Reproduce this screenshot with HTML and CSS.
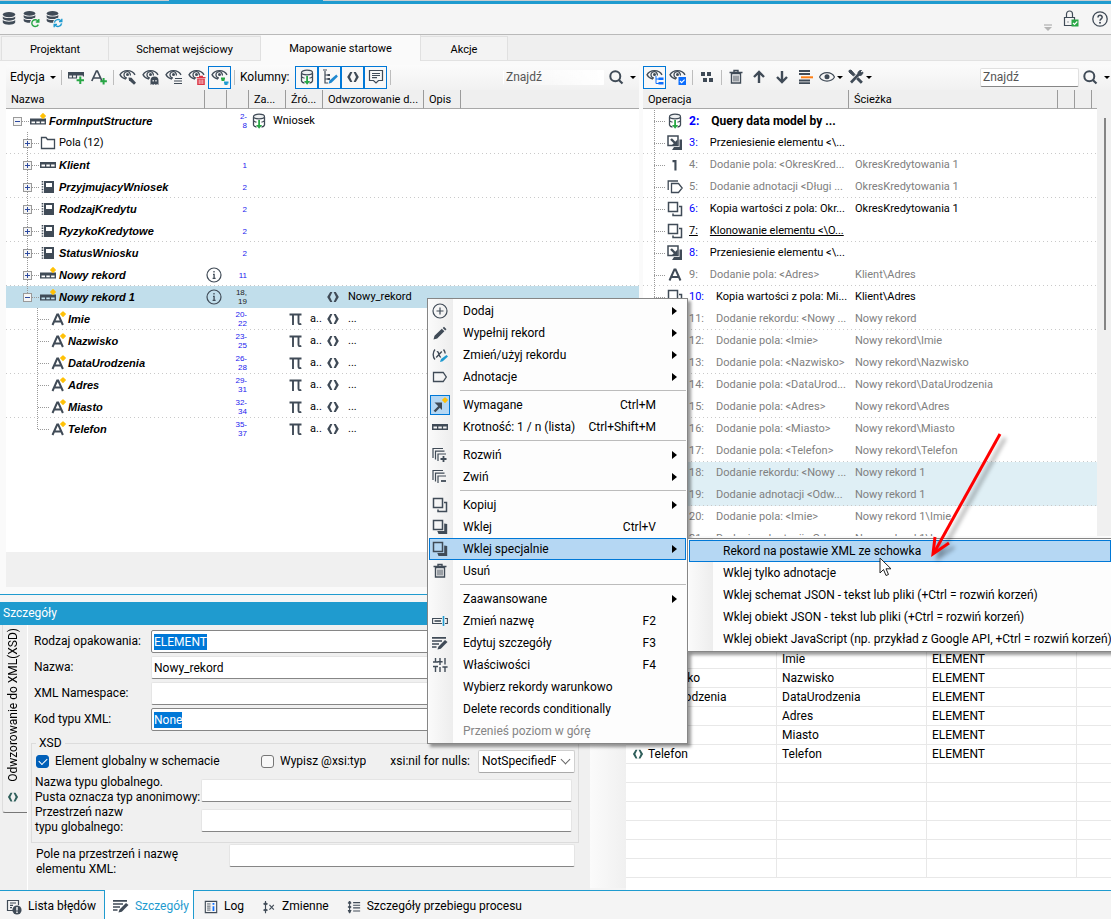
FILE: index.html
```html
<!DOCTYPE html>
<html lang="pl">
<head>
<meta charset="utf-8">
<title>Mapowanie startowe</title>
<link rel="stylesheet" href="styles.css">
</head>
<body>
<svg class="defs" aria-hidden="true">
  <defs>
    <symbol id="db" viewBox="0 0 16 16"><ellipse cx="8" cy="3.6" rx="6.2" ry="2.6"/><path d="M1.8 5.4c1.6 2.2 10.800 2.200 12.400 0v2.200c-1.200 2.800-11.200 2.800-12.400 0zM1.800 9c1.600 2.200 10.800 2.200 12.400 0v2.400c-1.200 3-11.200 3-12.400 0z"/></symbol>
    <symbol id="db-green" viewBox="0 0 18 18"><use href="#db" x="0" y="0" width="15" height="15"/><circle cx="13" cy="13" r="5" fill="#f5f5f5"/><path d="M16 11.200a3.400 3.400 0 1 0 .3 3.400M16.800 9v3h-3" fill="none" stroke="#28a745" stroke-width="1.400"/></symbol>
    <symbol id="db-blue" viewBox="0 0 18 18"><use href="#db" x="0" y="0" width="15" height="15"/><circle cx="13" cy="13" r="5" fill="#f5f5f5"/><path d="M9.400 12.600a3.600 3.600 0 0 1 6.600-1.400M16.600 13.400a3.600 3.600 0 0 1-6.600 1.400M16.800 8.800v2.800H14M9.200 17.200v-2.800H12" fill="none" stroke="#1e9ad0" stroke-width="1.400"/></symbol>
    <symbol id="db-down" viewBox="0 0 16 16"><path d="M2.500 4v8c.3 1 1.600 1.800 3 2M13.500 4v8c-.3 1-1.600 1.800-3 2M2.500 7.500c.8 1.200 2 1.500 3 1.600M13.500 7.500c-.8 1.200-2 1.500-3 1.600" fill="none" stroke="currentColor" stroke-width="1.300"/><ellipse cx="8" cy="3.500" rx="5.500" ry="2.300" fill="#eef0f1" stroke="currentColor" stroke-width="1.200"/><path d="M7.200 7h1.800v5h2.200L8.100 15.800 5 12h2.200z" fill="#28a745"/></symbol>
    <symbol id="rec" viewBox="0 0 16 16"><path d="M0 5h16v6H0zM1.500 7.500v2h3.500v-2zm4.800 0v2h3.500v-2zm4.800 0v2h3.500v-2z" fill-rule="evenodd"/></symbol>
    <symbol id="rec-star" viewBox="0 0 16 16"><path d="M0 5.500h16v6H0zM1.500 8.500v1.700h3.500V8.500zm4.800 0v1.700h3.500V8.500zm4.800 0v1.700h3.500V8.500z" fill-rule="evenodd"/><path d="M13 .8l2.200 2.200L13 5.200l-2.200-2.200z" fill="#ffc107" stroke="#ffc107" stroke-linejoin="round" stroke-width="1.400"/></symbol>
    <symbol id="rec-plus" viewBox="0 0 16 16"><path d="M0 3h16v3.500H0z"/><path d="M.6 6v3h8.400M4.500 6v3M8.500 6v3M15.400 6v1.500" fill="none" stroke="currentColor" stroke-width="1.200"/><path d="M12.300 7.500v7.500M8.600 11.200H16" stroke="#28a745" stroke-width="2" fill="none"/></symbol>
    <symbol id="letter-a" viewBox="0 0 16 16"><path d="M2.500 13.500L7.400 2.500h1.200l4.900 11M4.500 10h7" fill="none" stroke="currentColor" stroke-width="2"/></symbol>
    <symbol id="a-star" viewBox="0 0 16 16"><path d="M1.500 14L6.200 3.500h1L11.900 14M3.400 10.500h6.600" fill="none" stroke="currentColor" stroke-width="2"/><path d="M12 .9l2.200 2.200L12 5.300 9.800 3.100z" fill="#ffc107" stroke="#ffc107" stroke-linejoin="round" stroke-width="1.400"/></symbol>
    <symbol id="a-plus" viewBox="0 0 16 16"><path d="M.8 12L5.400 2h1L11 12M2.600 9h6.600" fill="none" stroke="currentColor" stroke-width="1.700"/><path d="M12.600 9v6.600M9.300 12.300h6.600" stroke="#28a745" stroke-width="2"/></symbol>
    <symbol id="eye" viewBox="0 0 16 16"><path d="M.5 8C3.500 2.200 12.500 2.200 15.500 8 12.500 13.400 3.500 13.400.5 8z" fill="none" stroke="currentColor" stroke-width="1.200"/><circle cx="8" cy="7.800" r="2.500"/></symbol>
    <symbol id="eye-half" viewBox="0 0 18 18"><path d="M7 11C4 10.500 2 8.800 1 6.800 4 1.200 13 1.200 16 6.800" fill="none" stroke="currentColor" stroke-width="1.400"/><path d="M11.300 7.500A3.200 3.200 0 1 0 8 10" fill="none" stroke="currentColor" stroke-width="1.300"/><circle cx="8.500" cy="6.500" r="1.500"/></symbol>
    <symbol id="eye-pick" viewBox="0 0 18 18"><use href="#eye-half" width="18" height="18"/><path d="M9.500 9.500l3 .3 4.500 5-2 2-5-4.500z"/></symbol>
    <symbol id="eye-ghost" viewBox="0 0 18 18"><use href="#eye-half" width="18" height="18"/><path d="M8.500 17v-4.500a4 4 0 0 1 8 0V17l-1.500-1-1 1-1.500-1-1.500 1-1-1z"/><path d="M10.600 12h1.200v1.500h-1.200zm2.800 0h1.200v1.500h-1.200z" fill="#f8f8f8"/></symbol>
    <symbol id="eye-lines" viewBox="0 0 18 18"><use href="#eye-half" width="18" height="18"/><path d="M10 10.500h7M9 13h8M9 15.500h8" stroke="currentColor" stroke-width="1.200"/></symbol>
    <symbol id="eye-trash" viewBox="0 0 18 18"><use href="#eye-half" width="18" height="18"/><path d="M8.500 9h9v1.300h-9zM11 7.800h4V9h-4zM9.200 10.800h7.600V17H9.200z" fill="#dc3545"/><path d="M11.200 11.500V16M13 11.500V16M14.800 11.500V16" stroke="#fff" stroke-width=".7"/></symbol>
    <symbol id="eye-dots" viewBox="0 0 18 18"><use href="#eye-half" width="18" height="18"/><path d="M10 10.500h4M10.500 12h3" stroke="#28a745" stroke-width="1.800"/><path d="M13 14.500h4.500M13.500 16h3" stroke="#1e9ad0" stroke-width="1.800"/></symbol>
    <symbol id="eye-tree" viewBox="0 0 18 18"><use href="#eye-half" width="18" height="18"/><path d="M10 8v7.500h3M10 11h3" fill="none" stroke="#0d6efd"/><path d="M12.500 9.500h5v2.500h-5zM12.500 14h5v2.500h-5z" fill="#0d6efd"/></symbol>
    <symbol id="eye-check" viewBox="0 0 18 18"><use href="#eye-half" width="18" height="18"/><path d="M9.500 9H17v8H9.500z" fill="#0d6efd"/><path d="M11 13l1.600 1.600 3-3" fill="none" stroke="#fff" stroke-width="1.100"/></symbol>
    <symbol id="tree-edit" viewBox="0 0 16 16"><path d="M1 1h4M3 2v12h3M3 6h3M3 10h3" fill="none" stroke="currentColor" stroke-width="1.200"/><path d="M5.500 5H8v2H5.500zM5.500 9H8v2H5.500z"/><path d="M6.500 14.800l1-3.200 6.800-6 1.600 2-6.400 6.200z" fill="#1e88d0"/></symbol>
    <symbol id="angle" viewBox="0 0 16 16"><path d="M5.200 3h2.200L5 8l2.400 5H5.200L2.200 8zM10.800 3H8.600L11 8l-2.400 5h2.200l3-5z"/></symbol>
    <symbol id="note" viewBox="0 0 16 16"><path d="M1.500 1.500h13v10h-4L8 14l-2.500-2.500h-4zM4 4.500h8M4 6.500h8M4 8.700h5" fill="none" stroke="currentColor" stroke-width="1.200"/></symbol>
    <symbol id="search" viewBox="0 0 16 16"><circle cx="7.300" cy="7.300" r="5" fill="none" stroke="currentColor" stroke-width="2"/><path d="M10.800 11l3.700 3.500" stroke="currentColor" stroke-width="2.200"/></symbol>
    <symbol id="blocks" viewBox="0 0 16 16"><path d="M2 3h4v4H2zM8 3h4v4H8zM4 9h4v4H4zM10 9h4v4h-4z"/></symbol>
    <symbol id="trash" viewBox="0 0 16 16"><path d="M1.500 3.500h13M6 3V1.500h4V3" fill="none" stroke="currentColor" stroke-width="1.400"/><path d="M3.500 4.500h9V14h-9z" fill="none" stroke="currentColor" stroke-width="1.400"/><path d="M6 6.500v6M8 6.500v6M10 6.500v6" stroke="currentColor"/></symbol>
    <symbol id="up" viewBox="0 0 16 16"><path d="M8 2.800V14M3 8l5-5 5 5" fill="none" stroke="currentColor" stroke-width="2.400"/></symbol>
    <symbol id="down" viewBox="0 0 16 16"><path d="M8 2v11.200M3 8l5 5 5-5" fill="none" stroke="currentColor" stroke-width="2.400"/></symbol>
    <symbol id="bars" viewBox="0 0 16 16"><path d="M2 2h11M2 5h11M2 11.500h11M2 14.200h11" stroke="currentColor" stroke-width="1.800"/><path d="M4 8.300h12" stroke="#fd7e14" stroke-width="2"/></symbol>
    <symbol id="tools" viewBox="0 0 16 16"><path d="M3 13.500L12 4" stroke="currentColor" stroke-width="2.600"/><path d="M10 5a3 3 0 0 1 3.500-3.500L12 3l1 1 1.800-1A3 3 0 0 1 11.500 6.500zM1 1.500l2-.5 4 4.500-1.500 1.500L1 3zM9 9.500L14 14" stroke="currentColor" stroke-width="1"/><path d="M9.300 9.300l4.500 4.500" stroke="currentColor" stroke-width="3"/></symbol>
    <symbol id="lock" viewBox="0 0 18 18"><path d="M2.500 7.500h10v8h-10zM4.500 7V4a3 3 0 0 1 6 0v3M5.500 12h1" fill="none" stroke="currentColor" stroke-width="1.200"/><path d="M9.500 9.500h7v7h-7z" fill="#28a745"/><path d="M11 13l1.500 1.500 2.800-3" fill="none" stroke="#fff" stroke-width="1.100"/></symbol>
    <symbol id="help" viewBox="0 0 16 16"><circle cx="8" cy="8" r="7.200" fill="none" stroke="currentColor" stroke-width="1.300"/><path d="M6 6.500c0-3 4.300-2.800 4.200-.2C10.200 7.800 8 8 8 9.800" fill="none" stroke="currentColor" stroke-width="1.500"/><circle cx="8" cy="11.800" r="1"/></symbol>
    <symbol id="folder" viewBox="0 0 16 16"><path d="M1.500 13.500v-11h4.500l1.500 2h7v9z" fill="none" stroke="currentColor" stroke-width="1.300"/></symbol>
    <symbol id="book" viewBox="0 0 16 16"><path d="M4 2h10v12H4zM6 4v4h6V4z" fill-rule="evenodd"/><path d="M2.500 2v12" stroke="currentColor" stroke-width="1.600" stroke-dasharray="1.400 1.200"/></symbol>
    <symbol id="info" viewBox="0 0 16 16"><circle cx="8" cy="8" r="7" fill="none" stroke="currentColor" stroke-width="1.200"/><path d="M8 4v1.500M7 7.300h1.100v3.700M6.600 11.300h3" fill="none" stroke="currentColor" stroke-width="1.300"/></symbol>
    <symbol id="pi" viewBox="0 0 16 16"><path d="M1.500 3.500h12M5 4v10M10.500 4v7.500c0 1.600 1 2 2.800 1.300" fill="none" stroke="currentColor" stroke-width="1.900"/></symbol>
    <symbol id="move" viewBox="0 0 16 16"><path d="M1 1h10v9.500H1z" fill="none" stroke="currentColor" stroke-width="1.500"/><path d="M4 4l5.500 5.500" stroke="currentColor" stroke-width="2.400"/><path d="M10.500 4.500v5.500H5z"/><path d="M12.500 4.500H15V15H5l2-3h5.500z"/></symbol>
    <symbol id="one" viewBox="0 0 16 16"><path d="M5.500 3h4v10.500H7.400V5.300H5.500z"/></symbol>
    <symbol id="tags" viewBox="0 0 16 16"><path d="M4.500 4.500h7L15.200 9l-3.700 4.500h-7zM1.200 11V2H11" fill="none" stroke="currentColor" stroke-width="1.300"/></symbol>
    <symbol id="copy" viewBox="0 0 16 16"><path d="M1.500 1.500h9v9h-9zM12 5.500h2.500v9H6V12.500" fill="none" stroke="currentColor" stroke-width="1.500"/></symbol>
    <symbol id="paste" viewBox="0 0 16 16"><path d="M1.500 1.500h9v9h-9z" fill="none" stroke="currentColor" stroke-width="1.500"/><path d="M12.200 4.500l3 .6V15H6.500L5.300 12h6.900z"/></symbol>
    <symbol id="circle-plus" viewBox="0 0 16 16"><circle cx="8" cy="8" r="7" fill="none" stroke="currentColor" stroke-width="1.200"/><path d="M8 4.500v7M4.500 8h7" stroke="currentColor" stroke-width="1.200"/></symbol>
    <symbol id="pencil" viewBox="0 0 16 16"><path d="M1.500 14.500l1-3.800 7.300-7 2.600 2.600-7.200 7.200zM10.700 2.900l1.300-1.200 2.500 2.500-1.300 1.300z"/></symbol>
    <symbol id="var-edit" viewBox="0 0 16 16"><path d="M3 2.500C.6 5 .6 10 3 12.500M11.500 2.500c1 1.200 1.600 2.500 1.700 4M4.800 4.700c2.400-1 1.800 6 4.200 5.400M9.800 4.500L4.200 10.500" fill="none" stroke="currentColor" stroke-width="1.400"/><path d="M8 15l1-3L14.500 8 16 9.600l-5.200 4.600z" fill="#1e9ad0"/></symbol>
    <symbol id="tag" viewBox="0 0 16 16"><path d="M1.500 3.500h9.700L14.300 8l-3.100 4.500H1.500z" fill="none" stroke="currentColor" stroke-width="1.300"/></symbol>
    <symbol id="required" viewBox="0 0 16 16"><path d="M2.500 14.500L8 9" stroke="currentColor" stroke-width="2.400"/><path d="M2.500 5.500H10V13L7.500 10.500 5 8z"/><path d="M13 .9l2.200 2.200L13 5.300l-2.200-2.200z" fill="#ffc107" stroke="#ffc107" stroke-linejoin="round" stroke-width="1.400"/></symbol>
    <symbol id="stack-plus" viewBox="0 0 16 16"><path d="M1 11V1.500h10M3.500 12.500V4.200h9M6 14V7h8" fill="none" stroke="currentColor" stroke-width="1.200"/><path d="M11.500 9v6M8.500 12h6" stroke="currentColor" stroke-width="1.800"/></symbol>
    <symbol id="stack-minus" viewBox="0 0 16 16"><path d="M1 11V1.500h10M3.500 12.500V4.200h9M6 14V7h8" fill="none" stroke="currentColor" stroke-width="1.200"/><path d="M9 12h5" stroke="currentColor" stroke-width="1.800"/></symbol>
    <symbol id="rename" viewBox="0 0 16 16"><path d="M10 5.500H.6v5H10M13 5.500h2.400v5H13" fill="none" stroke="currentColor" stroke-width="1.100"/><path d="M2.500 8H9" stroke="currentColor" stroke-width="1.600"/><path d="M11.500 3v10" stroke="#1e9ad0" stroke-width="1.600"/></symbol>
    <symbol id="edit-lines" viewBox="0 0 16 16"><path d="M0 2.800h14M0 6h10M0 9h7M0 12h4.500" stroke="currentColor" stroke-width="1.700"/><path d="M5.500 14.500l.8-2.800L13 5l2.500 2-6.700 6.800z"/></symbol>
    <symbol id="sliders" viewBox="0 0 16 16"><path d="M3.500 1v4M1 5h5M3.500 9v6M8 1v7M5.600 4.800h5M8 10v5M13 1v6.500M10.400 10h5.200M13 10v5M1 9.500h5" fill="none" stroke="currentColor" stroke-width="1.400"/></symbol>
    <symbol id="errors" viewBox="0 0 16 16"><path d="M7 11.500H1.500v-10h11V6M4 4h6M4 6.300h3M4 8.600h2" fill="none" stroke="currentColor" stroke-width="1.200"/><circle cx="11" cy="11" r="4.600"/><path d="M11 8v3.500M11 12.600V14" stroke="#fff" stroke-width="1.400"/></symbol>
    <symbol id="log" viewBox="0 0 16 16"><path d="M1.500 1.500h13v13h-13z" fill="none" stroke="currentColor" stroke-width="1.300"/><path d="M3.500 4.500h4M3.500 7h4M3.500 9.200h4M3.500 11.500h4" stroke="currentColor"/><path d="M10.800 3.500v2M10.800 7v5.500" stroke="#0d6efd" stroke-width="2"/></symbol>
    <symbol id="vars" viewBox="0 0 16 16"><path d="M4 1v14M1.500 4.500h5M1.500 11.500h5M8.500 5.500l5 5.500M13.500 5.500l-5 5.500" fill="none" stroke="currentColor" stroke-width="1.300"/><circle cx="4" cy="4.500" r="1.600"/><circle cx="4" cy="11.500" r="1.600"/></symbol>
    <symbol id="flow" viewBox="0 0 16 16"><path d="M3 1v14M1 3.500h4M1 8h4M1 12h4M7 3h8M7 6h8M7 9h8M7 12.500h8" fill="none" stroke="currentColor" stroke-width="1.200"/><circle cx="3" cy="3" r="1.500"/><circle cx="3" cy="8" r="1.500"/><circle cx="3" cy="13" r="1.500"/></symbol>
  </defs>
</svg>

<header class="appbar">
  <div class="accent"><span class="accent-a"></span><span class="accent-b"></span></div>
  <div class="appbar-row">
    <button class="app-btn" aria-label="Baza"><svg class="i16"><use href="#db"/></svg></button>
    <button class="app-btn" aria-label="Odśwież bazę"><svg class="i18"><use href="#db-green"/></svg></button>
    <button class="app-btn" aria-label="Synchronizuj bazę"><svg class="i18"><use href="#db-blue"/></svg></button>
    <span class="overflow-mark"></span>
    <button class="app-btn lock" aria-label="Blokada"><svg class="i18"><use href="#lock"/></svg></button>
    <button class="app-btn help" aria-label="Pomoc"><svg class="i16"><use href="#help"/></svg></button>
  </div>
</header>

<nav class="tabs">
  <button class="tab t1">Projektant</button>
  <button class="tab t2">Schemat wejściowy</button>
  <button class="tab t3 active">Mapowanie startowe</button>
  <button class="tab t4">Akcje</button>
</nav>

<main class="workspace">
  <section class="pane pane-left">
    <div class="toolbar">
      <button class="tb-text">Edycja <span class="caret"></span></button>
      <span class="sep"></span>
      <button class="tb" aria-label="Dodaj rekord"><svg class="i16"><use href="#rec-plus"/></svg></button>
      <button class="tb" aria-label="Dodaj pole"><svg class="i16"><use href="#a-plus"/></svg></button>
      <span class="sep"></span>
      <button class="tb" aria-label="Widok 1"><svg class="i18"><use href="#eye-pick"/></svg></button>
      <button class="tb" aria-label="Widok 2"><svg class="i18"><use href="#eye-ghost"/></svg></button>
      <button class="tb" aria-label="Widok 3"><svg class="i18"><use href="#eye-lines"/></svg></button>
      <button class="tb" aria-label="Widok 4"><svg class="i18"><use href="#eye-trash"/></svg></button>
      <button class="tb on" aria-label="Widok 5"><svg class="i18"><use href="#eye-dots"/></svg></button>
      <span class="sep"></span>
      <span class="tb-label">Kolumny:</span>
      <button class="tb on" aria-label="Źródło"><svg class="i16"><use href="#db-down"/></svg></button>
      <button class="tb on" aria-label="Drzewo"><svg class="i16"><use href="#tree-edit"/></svg></button>
      <button class="tb on" aria-label="XML"><svg class="i16"><use href="#angle"/></svg></button>
      <button class="tb on" aria-label="Opis"><svg class="i16"><use href="#note"/></svg></button>
      <span class="sep"></span>
      <input class="find plain" type="text" placeholder="Znajdź" aria-label="Znajdź w drzewie">
      <button class="tb-find" aria-label="Szukaj"><svg class="i16"><use href="#search"/></svg><span class="caret"></span></button>
    </div>
    <div class="grid-box">
      <table class="grid">
        <colgroup><col class="c199"><col class="c22"><col class="c22"><col class="c37"><col class="c37"><col class="c101"><col class="c37"><col></colgroup>
        <thead><tr><th>Nazwa</th><th></th><th></th><th>Za...</th><th>Źró...</th><th>Odwzorowanie d...</th><th>Opis</th><th class="last"></th></tr></thead>
        <tbody>
          <tr><td><div class="node"><span class="tg root"><button class="box minus" aria-label="Zwiń"></button></span><span class="dash"></span><svg class="i16"><use href="#rec-star"/></svg><b>FormInputStructure</b></div></td><td></td><td class="num">2-<br>8</td><td colspan="2"><div class="src"><svg class="i16"><use href="#db-down"/></svg>Wniosek</div></td><td></td><td></td><td></td></tr>
          <tr class="dots"><td><div class="node l1"><span class="tg"><button class="box plus" aria-label="Rozwiń"></button></span><span class="dash"></span><svg class="i16"><use href="#folder"/></svg>Pola (12)</div></td><td></td><td></td><td></td><td></td><td></td><td></td><td></td></tr>
          <tr><td><div class="node l1"><span class="tg"><button class="box plus" aria-label="Rozwiń"></button></span><span class="dash"></span><svg class="i16"><use href="#rec"/></svg><b>Klient</b></div></td><td></td><td class="num">1</td><td></td><td></td><td></td><td></td><td></td></tr>
          <tr class="dots"><td><div class="node l1"><span class="tg"><button class="box plus" aria-label="Rozwiń"></button></span><span class="dash"></span><svg class="i16"><use href="#book"/></svg><b>PrzyjmujacyWniosek</b></div></td><td></td><td class="num">2</td><td></td><td></td><td></td><td></td><td></td></tr>
          <tr><td><div class="node l1"><span class="tg"><button class="box plus" aria-label="Rozwiń"></button></span><span class="dash"></span><svg class="i16"><use href="#book"/></svg><b>RodzajKredytu</b></div></td><td></td><td class="num">2</td><td></td><td></td><td></td><td></td><td></td></tr>
          <tr class="dots"><td><div class="node l1"><span class="tg"><button class="box plus" aria-label="Rozwiń"></button></span><span class="dash"></span><svg class="i16"><use href="#book"/></svg><b>RyzykoKredytowe</b></div></td><td></td><td class="num">2</td><td></td><td></td><td></td><td></td><td></td></tr>
          <tr><td><div class="node l1"><span class="tg"><button class="box plus" aria-label="Rozwiń"></button></span><span class="dash"></span><svg class="i16"><use href="#book"/></svg><b>StatusWniosku</b></div></td><td></td><td class="num">2</td><td></td><td></td><td></td><td></td><td></td></tr>
          <tr class="dots"><td><div class="node l1"><span class="tg"><button class="box plus" aria-label="Rozwiń"></button></span><span class="dash"></span><svg class="i16"><use href="#rec-star"/></svg><b>Nowy rekord</b></div></td><td class="ic"><svg class="i16"><use href="#info"/></svg></td><td class="num">11</td><td></td><td></td><td></td><td></td><td></td></tr>
          <tr class="sel"><td><div class="node l1"><span class="tg end"><button class="box minus" aria-label="Zwiń"></button></span><span class="dash"></span><svg class="i16"><use href="#rec-star"/></svg><b>Nowy rekord 1</b></div></td><td class="ic"><svg class="i16"><use href="#info"/></svg></td><td class="num dark">18,<br>19</td><td></td><td></td><td><div class="map"><svg class="i16"><use href="#angle"/></svg>Nowy_rekord</div></td><td></td><td></td></tr>
          <tr class="dots"><td><div class="node l2"><span class="tg leaf"></span><span class="dash"></span><svg class="i16"><use href="#a-star"/></svg><b>Imie</b></div></td><td></td><td class="num">20-<br>22</td><td></td><td><div class="pi"><svg class="i16"><use href="#pi"/></svg>a..</div></td><td><div class="map"><svg class="i16"><use href="#angle"/></svg>...</div></td><td></td><td></td></tr>
          <tr><td><div class="node l2"><span class="tg leaf"></span><span class="dash"></span><svg class="i16"><use href="#a-star"/></svg><b>Nazwisko</b></div></td><td></td><td class="num">23-<br>25</td><td></td><td><div class="pi"><svg class="i16"><use href="#pi"/></svg>a..</div></td><td><div class="map"><svg class="i16"><use href="#angle"/></svg>...</div></td><td></td><td></td></tr>
          <tr class="dots"><td><div class="node l2"><span class="tg leaf"></span><span class="dash"></span><svg class="i16"><use href="#a-star"/></svg><b>DataUrodzenia</b></div></td><td></td><td class="num">26-<br>28</td><td></td><td><div class="pi"><svg class="i16"><use href="#pi"/></svg>a..</div></td><td><div class="map"><svg class="i16"><use href="#angle"/></svg>...</div></td><td></td><td></td></tr>
          <tr><td><div class="node l2"><span class="tg leaf"></span><span class="dash"></span><svg class="i16"><use href="#a-star"/></svg><b>Adres</b></div></td><td></td><td class="num">29-<br>31</td><td></td><td><div class="pi"><svg class="i16"><use href="#pi"/></svg>a..</div></td><td><div class="map"><svg class="i16"><use href="#angle"/></svg>...</div></td><td></td><td></td></tr>
          <tr class="dots"><td><div class="node l2"><span class="tg leaf"></span><span class="dash"></span><svg class="i16"><use href="#a-star"/></svg><b>Miasto</b></div></td><td></td><td class="num">32-<br>34</td><td></td><td><div class="pi"><svg class="i16"><use href="#pi"/></svg>a..</div></td><td><div class="map"><svg class="i16"><use href="#angle"/></svg>...</div></td><td></td><td></td></tr>
          <tr><td><div class="node l2"><span class="tg leaf end"></span><span class="dash"></span><svg class="i16"><use href="#a-star"/></svg><b>Telefon</b></div></td><td></td><td class="num">35-<br>37</td><td></td><td><div class="pi"><svg class="i16"><use href="#pi"/></svg>a..</div></td><td><div class="map"><svg class="i16"><use href="#angle"/></svg>...</div></td><td></td><td></td></tr>
        </tbody>
      </table>
    </div>
    <div class="grid-foot"></div>
  </section>

  <section class="pane pane-right">
    <div class="toolbar">
      <button class="tb on" aria-label="Drzewo operacji"><svg class="i18"><use href="#eye-tree"/></svg></button>
      <button class="tb" aria-label="Zaznaczone"><svg class="i18"><use href="#eye-check"/></svg></button>
      <span class="sep"></span>
      <button class="tb" aria-label="Bloki"><svg class="i16"><use href="#blocks"/></svg></button>
      <span class="sep"></span>
      <button class="tb" aria-label="Usuń"><svg class="i16"><use href="#trash"/></svg></button>
      <button class="tb" aria-label="W górę"><svg class="i16"><use href="#up"/></svg></button>
      <button class="tb" aria-label="W dół"><svg class="i16"><use href="#down"/></svg></button>
      <button class="tb" aria-label="Lista"><svg class="i16"><use href="#bars"/></svg></button>
      <button class="tb wide" aria-label="Widoczność"><svg class="i16"><use href="#eye"/></svg><span class="caret"></span></button>
      <button class="tb wide" aria-label="Narzędzia"><svg class="i16"><use href="#tools"/></svg><span class="caret"></span></button>
      <input class="find" type="text" placeholder="Znajdź" aria-label="Znajdź operację">
      <button class="tb-find" aria-label="Szukaj"><svg class="i16"><use href="#search"/></svg><span class="caret"></span></button>
    </div>
    <div class="ops">
      <div class="grid-box">
        <table class="grid">
          <colgroup><col class="c206"><col><col class="c17"><col class="c17"><col class="c5"></colgroup>
          <thead><tr><th>Operacja</th><th>Ścieżka</th><th></th><th></th><th class="last"></th></tr></thead>
          <tbody>
            <tr class="strong"><td><div class="op"><svg class="i16"><use href="#db-down"/></svg><i>2:</i><span>Query data model by ...</span></div></td><td colspan="4"></td></tr>
            <tr class="dots"><td><div class="op"><svg class="i16"><use href="#move"/></svg><i>3:</i><span>Przeniesienie elementu &lt;\...</span></div></td><td colspan="4"></td></tr>
            <tr class="dim"><td><div class="op"><svg class="i16"><use href="#one"/></svg><i>4:</i><span>Dodanie pola: &lt;OkresKred...</span></div></td><td colspan="4">OkresKredytowania 1</td></tr>
            <tr class="dim dots"><td><div class="op"><svg class="i16"><use href="#tags"/></svg><i>5:</i><span>Dodanie adnotacji &lt;Długi ...</span></div></td><td colspan="4">OkresKredytowania 1</td></tr>
            <tr><td><div class="op"><svg class="i16"><use href="#copy"/></svg><i>6:</i><span>Kopia wartości z pola: Okr...</span></div></td><td colspan="4">OkresKredytowania 1</td></tr>
            <tr class="dots link"><td><div class="op"><svg class="i16"><use href="#copy"/></svg><i>7:</i><span>Klonowanie elementu &lt;\O...</span></div></td><td colspan="4"></td></tr>
            <tr><td><div class="op"><svg class="i16"><use href="#move"/></svg><i>8:</i><span>Przeniesienie elementu &lt;\...</span></div></td><td colspan="4"></td></tr>
            <tr class="dim dots"><td><div class="op"><svg class="i16"><use href="#letter-a"/></svg><i>9:</i><span>Dodanie pola: &lt;Adres&gt;</span></div></td><td colspan="4">Klient\Adres</td></tr>
            <tr><td><div class="op"><svg class="i16"><use href="#copy"/></svg><i>10:</i><span>Kopia wartości z pola: Mi...</span></div></td><td colspan="4">Klient\Adres</td></tr>
            <tr class="dim dots"><td><div class="op"><svg class="i16"><use href="#rec"/></svg><i>11:</i><span>Dodanie rekordu: &lt;Nowy ...</span></div></td><td colspan="4">Nowy rekord</td></tr>
            <tr class="dim"><td><div class="op"><svg class="i16"><use href="#letter-a"/></svg><i>12:</i><span>Dodanie pola: &lt;Imie&gt;</span></div></td><td colspan="4">Nowy rekord\Imie</td></tr>
            <tr class="dim dots"><td><div class="op"><svg class="i16"><use href="#letter-a"/></svg><i>13:</i><span>Dodanie pola: &lt;Nazwisko&gt;</span></div></td><td colspan="4">Nowy rekord\Nazwisko</td></tr>
            <tr class="dim"><td><div class="op"><svg class="i16"><use href="#letter-a"/></svg><i>14:</i><span>Dodanie pola: &lt;DataUrod...</span></div></td><td colspan="4">Nowy rekord\DataUrodzenia</td></tr>
            <tr class="dim dots"><td><div class="op"><svg class="i16"><use href="#letter-a"/></svg><i>15:</i><span>Dodanie pola: &lt;Adres&gt;</span></div></td><td colspan="4">Nowy rekord\Adres</td></tr>
            <tr class="dim"><td><div class="op"><svg class="i16"><use href="#letter-a"/></svg><i>16:</i><span>Dodanie pola: &lt;Miasto&gt;</span></div></td><td colspan="4">Nowy rekord\Miasto</td></tr>
            <tr class="dim dots"><td><div class="op"><svg class="i16"><use href="#letter-a"/></svg><i>17:</i><span>Dodanie pola: &lt;Telefon&gt;</span></div></td><td colspan="4">Nowy rekord\Telefon</td></tr>
            <tr class="dim mark"><td><div class="op"><svg class="i16"><use href="#rec"/></svg><i>18:</i><span>Dodanie rekordu: &lt;Nowy ...</span></div></td><td colspan="4">Nowy rekord 1</td></tr>
            <tr class="dim mark dots"><td><div class="op"><svg class="i16"><use href="#tags"/></svg><i>19:</i><span>Dodanie adnotacji &lt;Odw...</span></div></td><td colspan="4">Nowy rekord 1</td></tr>
            <tr class="dim"><td><div class="op"><svg class="i16"><use href="#letter-a"/></svg><i>20:</i><span>Dodanie pola: &lt;Imie&gt;</span></div></td><td colspan="4">Nowy rekord 1\Imie</td></tr>
            <tr class="dim"><td><div class="op"><svg class="i16"><use href="#tags"/></svg><i>21:</i><span>Dodanie adnotacji &lt;Odw...</span></div></td><td colspan="4">Nowy rekord 1\Imie</td></tr>
          </tbody>
        </table>
      </div>
      <div class="scroll"><span class="thumb"></span></div>
    </div>
  </section>
</main>

<section class="bottom">
  <div class="details">
    <h2>Szczegóły</h2>
    <div class="details-body">
      <div class="side">
        <button class="side-tab"><svg class="i14"><use href="#angle"/></svg><span>Odwzorowanie do XML(XSD)</span></button>
      </div>
      <form class="form">
        <div class="row"><label for="f1">Rodzaj opakowania:</label><div class="field combo"><input id="f1" type="text" value="ELEMENT"></div></div>
        <div class="row"><label for="f2">Nazwa:</label><div class="field"><input id="f2" type="text" value="Nowy_rekord"></div></div>
        <div class="row"><label for="f3">XML Namespace:</label><div class="field"><input id="f3" type="text"></div></div>
        <div class="row"><label for="f4">Kod typu XML:</label><div class="field combo"><input id="f4" type="text" value="None"></div></div>
        <fieldset>
          <legend>XSD</legend>
          <div class="checks">
            <input id="g1" type="checkbox" checked><label for="g1" class="grow">Element globalny w schemacie</label>
            <input id="g2" type="checkbox"><label for="g2" class="typ">Wypisz @xsi:typ</label>
            <label for="g3" class="nil">xsi:nil for nulls:</label>
            <select id="g3"><option>NotSpecifiedForNulls</option></select>
          </div>
          <div class="row2"><label for="g4">Nazwa typu globalnego.<br>Pusta oznacza typ anonimowy:</label><div class="field"><input id="g4" type="text"></div></div>
          <div class="row2"><label for="g5">Przestrzeń nazw<br>typu globalnego:</label><div class="field"><input id="g5" type="text"></div></div>
        </fieldset>
        <div class="row3"><label for="f5">Pole na przestrzeń i nazwę<br>elementu XML:</label><div class="field"><input id="f5" type="text"></div></div>
      </form>
    </div>
  </div>
  <div class="gutter"></div>
  <div class="data">
    <table>
      <colgroup><col class="c151"><col class="c150"><col class="c150"><col></colgroup>
      <thead><tr><td colspan="4"></td></tr></thead>
      <tbody>
        <tr><td><div><svg class="i14"><use href="#angle"/></svg>Imie</div></td><td>Imie</td><td>ELEMENT</td><td></td></tr>
        <tr><td><div><svg class="i14"><use href="#angle"/></svg>Nazwisko</div></td><td>Nazwisko</td><td>ELEMENT</td><td></td></tr>
        <tr><td><div><svg class="i14"><use href="#angle"/></svg>DataUrodzenia</div></td><td>DataUrodzenia</td><td>ELEMENT</td><td></td></tr>
        <tr><td><div><svg class="i14"><use href="#angle"/></svg>Adres</div></td><td>Adres</td><td>ELEMENT</td><td></td></tr>
        <tr><td><div><svg class="i14"><use href="#angle"/></svg>Miasto</div></td><td>Miasto</td><td>ELEMENT</td><td></td></tr>
        <tr><td><div><svg class="i14"><use href="#angle"/></svg>Telefon</div></td><td>Telefon</td><td>ELEMENT</td><td></td></tr>
        <tr><td></td><td></td><td></td><td></td></tr>
        <tr><td></td><td></td><td></td><td></td></tr>
        <tr><td></td><td></td><td></td><td></td></tr>
        <tr><td></td><td></td><td></td><td></td></tr>
        <tr><td></td><td></td><td></td><td></td></tr>
        <tr><td></td><td></td><td></td><td></td></tr>
      </tbody>
    </table>
  </div>
</section>

<nav class="dock">
  <button><svg class="i16"><use href="#errors"/></svg>Lista błędów</button>
  <button class="active"><svg class="i16"><use href="#edit-lines"/></svg>Szczegóły</button>
  <button><svg class="i14"><use href="#log"/></svg>Log</button>
  <button><svg class="i14"><use href="#vars"/></svg>Zmienne</button>
  <button><svg class="i14"><use href="#flow"/></svg>Szczegóły przebiegu procesu</button>
</nav>

<div class="menu context" role="menu">
  <button role="menuitem"><svg class="i16"><use href="#circle-plus"/></svg><span>Dodaj</span><em class="arr"></em></button>
  <button role="menuitem"><svg class="i16"><use href="#pencil"/></svg><span>Wypełnij rekord</span><em class="arr"></em></button>
  <button role="menuitem"><svg class="i16"><use href="#var-edit"/></svg><span>Zmień/użyj rekordu</span><em class="arr"></em></button>
  <button role="menuitem"><svg class="i16"><use href="#tag"/></svg><span>Adnotacje</span><em class="arr"></em></button>
  <hr>
  <button role="menuitem" class="checked"><svg class="i16"><use href="#required"/></svg><span>Wymagane</span><kbd>Ctrl+M</kbd></button>
  <button role="menuitem"><svg class="i16"><use href="#rec"/></svg><span>Krotność: 1 / n (lista)</span><kbd>Ctrl+Shift+M</kbd></button>
  <hr>
  <button role="menuitem"><svg class="i16"><use href="#stack-plus"/></svg><span>Rozwiń</span><em class="arr"></em></button>
  <button role="menuitem"><svg class="i16"><use href="#stack-minus"/></svg><span>Zwiń</span><em class="arr"></em></button>
  <hr>
  <button role="menuitem"><svg class="i16"><use href="#copy"/></svg><span>Kopiuj</span><em class="arr"></em></button>
  <button role="menuitem"><svg class="i16"><use href="#paste"/></svg><span>Wklej</span><kbd>Ctrl+V</kbd></button>
  <button role="menuitem" class="hot"><svg class="i16"><use href="#paste"/></svg><span>Wklej specjalnie</span><em class="arr"></em></button>
  <button role="menuitem"><svg class="i16"><use href="#trash"/></svg><span>Usuń</span></button>
  <hr>
  <button role="menuitem"><span class="no-icon"></span><span>Zaawansowane</span><em class="arr"></em></button>
  <button role="menuitem"><svg class="i16"><use href="#rename"/></svg><span>Zmień nazwę</span><kbd>F2</kbd></button>
  <button role="menuitem"><svg class="i16"><use href="#edit-lines"/></svg><span>Edytuj szczegóły</span><kbd>F3</kbd></button>
  <button role="menuitem"><svg class="i16"><use href="#sliders"/></svg><span>Właściwości</span><kbd>F4</kbd></button>
  <button role="menuitem"><span class="no-icon"></span><span>Wybierz rekordy warunkowo</span></button>
  <button role="menuitem"><span class="no-icon"></span><span>Delete records conditionally</span></button>
  <button role="menuitem" disabled><span class="no-icon"></span><span>Przenieś poziom w górę</span></button>
</div>

<div class="menu submenu" role="menu">
  <button role="menuitem" class="hot"><span class="no-icon"></span><span>Rekord na postawie XML ze schowka</span></button>
  <button role="menuitem"><span class="no-icon"></span><span>Wklej tylko adnotacje</span></button>
  <button role="menuitem"><span class="no-icon"></span><span>Wklej schemat JSON - tekst lub pliki (+Ctrl = rozwiń korzeń)</span></button>
  <button role="menuitem"><span class="no-icon"></span><span>Wklej obiekt JSON - tekst lub pliki (+Ctrl = rozwiń korzeń)</span></button>
  <button role="menuitem"><span class="no-icon"></span><span>Wklej obiekt JavaScript (np. przykład z Google API, +Ctrl = rozwiń korzeń)</span></button>
</div>

<svg class="pointer-arrow" viewBox="0 0 90 140" aria-hidden="true">
  <g fill="none" stroke="#f00" stroke-width="3"><path d="M75 9L10 126"/><path d="M10 112L8 129 24 118"/></g>
</svg>
<svg class="cursor" viewBox="0 0 14 20" aria-hidden="true"><path d="M1 1v15l3.500-3.500L7 18.500l2.500-1-2.500-5.700h5z" fill="#fff" stroke="#222"/></svg>
</body>
</html>
```

FILE: styles.css
```css
:root {
  --ui: Roboto, "Open Sans", sans-serif;
  --grid: Roboto, "Liberation Sans", sans-serif;
  --ink: #404b57;
  --blue: #1f9bcf;
  --focus: #0078d7;
}
* { box-sizing: border-box; }
body {
  margin: 0;
  height: 100vh;
  display: flex;
  flex-direction: column;
  overflow: hidden;
  position: relative;
  background: #fafafa;
  color: #000;
  font: 12px/15px var(--ui);
}
button { border: 0; padding: 0; margin: 0; background: none; font: inherit; color: inherit; }
svg { color: var(--ink); fill: currentColor; flex: none; display: block; }
.defs { position: absolute; width: 0; height: 0; }
.i14 { width: 14px; height: 14px; }
.i16 { width: 16px; height: 16px; }
.i18 { width: 18px; height: 18px; }
.caret { width: 0; height: 0; border: 3px solid transparent; border-top-color: #000; border-bottom: 0; }

/* application bar */
.appbar { flex: none; background: #f5f5f5; border-bottom: 1px solid #b9b9b9; }
.accent { display: flex; height: 4px; background: var(--blue); }
.accent span { height: 1px; background: #c9cdd0; }
.accent-a { flex: 0 0 169px; }
.accent-b { flex: 1; margin-left: 154px; }
.appbar-row { display: flex; align-items: center; height: 30px; padding: 0 3px 0 1px; gap: 5px; }
.app-btn { display: flex; }
.overflow-mark { width: 8px; height: 7px; margin: 0 0 3px auto; align-self: flex-end; background: linear-gradient(#ccc, #ccc) 0 0 / 8px 2px no-repeat; }
.overflow-mark::after { content: ""; display: block; margin-top: 3px; border: 4px solid transparent; border-top-color: #b5b5b5; border-bottom: 0; }
.lock { margin-left: 5px; }
.help { margin-left: 7px; }

/* document tabs */
.tabs { flex: none; display: flex; align-items: flex-end; height: 26px; padding-left: 1px; background: #efefef; border-bottom: 1px solid #e2e2e2; font: 11px/15px var(--grid); }
.tab { height: 24px; padding-top: 2px; border: 1px solid #e0e0e0; border-bottom: 0; border-left: 0; background: #f3f3f3; }
.t1 { width: 108px; border-left: 1px solid #e0e0e0; }
.t2 { width: 152px; }
.t3 { width: 160px; }
.t4 { width: 87px; }
.tab.active { height: 26px; margin-bottom: -1px; padding-top: 0; background: #fafafa; border: 0; border-right: 1px solid #e0e0e0; }

/* workspace */
.workspace { flex: 1 1 0; min-height: 0; display: grid; grid-template-columns: 633fr 468fr; gap: 4px; padding: 4px 0 0 6px; }
.pane { display: flex; flex-direction: column; min-width: 0; min-height: 0; }
.toolbar { flex: none; display: flex; align-items: center; height: 25px; padding-bottom: 1px; background: linear-gradient(#fbfbfb, #f1f1f1); }
.tb { width: 23px; height: 23px; display: flex; align-items: center; justify-content: center; }
.tb.wide { width: 29px; gap: 2px; }
.tb.on { border: 1px solid var(--focus); background: #f8f8f8; }
.tb-text { width: 52px; padding-left: 4px; display: flex; align-items: center; gap: 5px; }
.tb-label { width: 58px; padding-left: 3px; white-space: nowrap; }
.sep { width: 1px; height: 15px; margin: 0 2px 0 3px; background: #bdbdbd; }
.find { width: 99px; height: 19px; margin: 0 0 0 auto; padding: 0 2px; border: 1px solid #e0e0e0; border-bottom-color: #868686; background: #fff; font: 12px/15px var(--grid); border-radius: 2px; }
.find::placeholder { color: #555; opacity: 1; }
.find.plain { width: 102px; border-color: transparent; height: 15px; background: linear-gradient(90deg, transparent, #fff); }
.tb-find { width: 32px; display: flex; align-items: center; gap: 6px; padding-left: 3px; }
.plain + .tb-find { width: 34px; }

.grid-box { flex: 1; min-height: 0; min-width: 0; overflow: hidden; background: #fff; }
.grid-foot { flex: none; height: 35px; margin-bottom: 7px; background: #f0f0f0; }
.grid { width: 100%; table-layout: fixed; border-spacing: 0; font: 11px/16px var(--grid); white-space: nowrap; }
.grid th { height: 19px; padding: 1px 0 0 5px; text-align: left; font-weight: 400; background: #efefef; border-right: 1px solid #9b9b9b; border-bottom: 1px solid #a8a8a8; overflow: hidden; }
.grid th.last { border-right: 0; }
.grid thead::after { content: ""; display: table-row; height: 1px; }
.grid td { height: 22px; padding: 0; }
.grid .dots { background: repeating-linear-gradient(90deg, #c9c9c9 0 1px, transparent 1px 4px) 0 100% / 100% 1px no-repeat; }
.c5 { width: 5px; } .c17 { width: 17px; } .c22 { width: 22px; } .c37 { width: 37px; }
.c101 { width: 101px; } .c150 { width: 150px; } .c151 { width: 151px; } .c199 { width: 199px; } .c206 { width: 206px; }
.sel { background: #c1deeb; }
.mark { background-color: #dfeff5 !important; }

.node { display: flex; align-items: center; height: 22px; padding-left: 7px; }
.node b { font-family: "Liberation Sans", Arial, sans-serif; font-style: italic; }
.node.l1 { padding-left: 17px; }
.node.l2 { padding-left: 27px; }
.node svg { margin: 0 3px 0 1px; }
.tg { width: 9px; height: 22px; display: flex; align-items: center; background: repeating-linear-gradient(#999 0 1px, transparent 1px 2px) 4px 0 / 1px 100% no-repeat; }
.tg.root { background: none; }
.tg.end { background-size: 1px 11px; }
.dash { width: 7px; height: 1px; background: repeating-linear-gradient(90deg, #999 0 1px, transparent 1px 2px); }
.l2 .dash { width: 11px; margin-left: -4px; }
.l2 svg { margin: 0 1px 0 2px; }
.box { width: 9px; height: 9px; border: 1px solid #9a9a9a; background: linear-gradient(#2d4aa0, #2d4aa0) center / 5px 1px no-repeat, #f5f5f5; }
.box.plus { background: linear-gradient(#2d4aa0, #2d4aa0) center / 5px 1px no-repeat, linear-gradient(#2d4aa0, #2d4aa0) center / 1px 5px no-repeat, #f5f5f5; }
.ic svg { margin-left: 1px; }
.grid td.num { padding-right: 2px; text-align: right; font: 8px/9px "Liberation Sans", sans-serif; color: #22e; }
.grid td.num.dark { color: #222; }
.src { display: flex; align-items: center; gap: 6px; padding-left: 2px; }
.pi { display: flex; align-items: center; gap: 6px; padding-left: 2px; }
.map { display: flex; align-items: center; gap: 7px; padding-left: 2px; }

.ops { flex: 1; min-height: 0; display: flex; margin-bottom: 58px; }
.scroll { flex: 0 0 14px; background: #f0f0f0; padding: 28px 0 0 7px; }
.thumb { display: block; width: 2px; height: 212px; background: #858585; }
.op { display: flex; align-items: center; height: 22px; padding-left: 24px; background: repeating-linear-gradient(#999 0 1px, transparent 1px 2px) 11px 0 / 1px 100% no-repeat, repeating-linear-gradient(90deg, #999 0 1px, transparent 1px 2px) 11px 50% / 12px 1px no-repeat; }
.op i { margin: 0 12px 0 6px; font-style: normal; color: #00f; }
.pane-right td + td { padding-left: 6px; }
.dim td, .dim i { color: #808080; }
.link i, .link span { color: #000; text-decoration: underline; }
.strong { font-weight: 700; font-size: 12px; }

/* details panel */
.bottom { flex: none; display: grid; grid-template-columns: 590fr 36px 485fr; border-top: 1px solid var(--blue); background: #f5f5f5; }
.details { padding-top: 7px; background: #f5f5f5; }
.details h2 { margin: 0; height: 23px; padding: 4px 3px; background: var(--blue); color: #fff; font-size: 12px; font-weight: 400; line-height: 15px; }
.details-body { display: flex; background: #f0f0f0; }
.side { width: 27px; padding-left: 2px; }
.side-tab { width: 25px; height: 188px; display: flex; flex-direction: column-reverse; align-items: center; justify-content: flex-start; padding: 0 4px 8px 0; gap: 8px; border-left: 1px solid #ddd; border-bottom: 1px solid #777; border-radius: 0 0 0 3px; }
.side-tab span { writing-mode: vertical-rl; transform: rotate(180deg); white-space: nowrap; }
.side-tab svg { fill: #2f5f5b; }
.form { flex: 1; min-width: 0; padding: 5px 15px 17px 3px; border-left: 1px solid #fff; }
.row { display: flex; align-items: center; padding-left: 3px; margin-bottom: 3px; }
.row label { width: 117px; white-space: nowrap; }
.field { flex: 1; height: 23px; min-width: 0; display: flex; align-items: center; padding: 0 2px; background: #fff; border: 1px solid #e5e5e5; border-bottom-color: #868686; border-radius: 2px; }
.field.combo { border: 1px solid #868686; }
.field input { width: 100%; height: 19px; border: 0; padding: 0; background: none; font: inherit; outline: 0; }
.combo input { width: auto; height: 16px; field-sizing: content; background: var(--focus); color: #fff; }
fieldset { position: relative; margin: 6px -4px 0 0; padding: 6px 6px 7px 3px; border: 1px solid #dcdcdc; min-width: 0; }
legend { padding: 0 3px; margin-left: 1px; height: 12px; line-height: 12px; }
.checks { position: relative; display: flex; align-items: center; height: 24px; margin-top: -6px; margin-bottom: 2px; white-space: nowrap; }
.checks input { appearance: none; width: 13px; height: 13px; margin: 0 6px 0 1px; border: 1px solid #767676; border-radius: 3px; background: #f8f8f8; }
.checks input:checked { border-color: #005fb8; background: #005fb8; display: flex; align-items: center; justify-content: center; }
.checks input:checked::after { content: ""; width: 7px; height: 4px; margin-top: -2px; border: solid #fff; border-width: 0 0 1px 1px; transform: rotate(-45deg); }
.checks .grow { width: 205px; }
.typ { overflow: hidden; }
.nil { margin-left: auto; margin-right: 8px; }
select { width: 97px; height: 23px; margin-right: -3px; padding: 0 18px 0 3px; appearance: none; border: 1px solid #d0d0d0; border-bottom-color: #aaa; border-radius: 2px; background: #fff; font: inherit; text-overflow: clip; }
.checks::after { content: ""; position: absolute; right: 3px; top: 7px; width: 6px; height: 6px; border: solid #666; border-width: 0 1px 1px 0; transform: rotate(45deg); }
.row2, .row3 { display: flex; align-items: center; height: 30px; }
.row2 label { flex: 0 0 166px; white-space: nowrap; }
.row3 { align-items: flex-start; padding-left: 5px; }
.row3 .field { margin-top: 1px; }
.row3 label { flex: 0 0 193px; padding-top: 4px; white-space: nowrap; }

.gutter { margin-bottom: 2px; background: linear-gradient(90deg, #fbfbfb, #f0f0f0); }
.data { overflow: hidden; background: #fff; min-width: 0; }
.data table { width: 100%; table-layout: fixed; border-spacing: 0; }
.data thead td { height: 55px; border: 0; }
.data td { height: 19px; padding: 0 0 0 5px; border-right: 1px solid #e8e8e8; border-bottom: 1px solid #e8e8e8; }
.data tr td:last-child { border-right: 0; }
.data td div { display: flex; align-items: center; gap: 3px; }
.data svg { fill: #2f5f5b; }

/* dock tabs */
.dock { flex: none; display: flex; height: 29px; border-top: 1px solid var(--blue); background: #f4f4f4; white-space: nowrap; }
.dock button { display: flex; align-items: center; gap: 6px; padding: 3px 8px 0 6px; margin-right: 4px; }
.dock button:first-child { margin: 0; padding-right: 8px; }
.dock .active { margin: -1px 4px 0 0; padding-left: 8px; padding-right: 4px; border: 1px solid var(--blue); border-width: 0 1px; background: #fff; color: var(--blue); }

/* menus */
.menu { position: absolute; padding: 1px; border: 1px solid #868686; background: linear-gradient(90deg, #fafafa, #ededed) 1px 0 / 24px 100% no-repeat, #fdfdfd; box-shadow: 3px 3px 3px rgb(0 0 0 / 40%); }
.context { left: 427px; top: 298px; width: 261px; }
.submenu { left: 687px; top: 538px; right: 0; border-right: 0; padding-right: 0; }
.menu button { width: 100%; height: 22px; display: flex; align-items: center; padding: 0 9px 0 3px; text-align: left; white-space: nowrap; }
.menu button svg, .no-icon { width: 16px; margin-right: 15px; flex: none; }
.menu button:disabled { color: #858585; }
.menu .hot { background: #b5d7f3; box-shadow: inset 0 0 0 1px var(--focus); }
.checked svg { outline: 1px solid var(--focus); outline-offset: 1px; background: #b5d7f3; box-shadow: 0 0 0 1px #b5d7f3; }
.menu hr { height: 1px; margin: 2px 0 3px 31px; border: 0; background: #bcbcbc; }
.menu kbd { margin-left: auto; margin-right: 21px; font: inherit; }
.arr { margin-left: auto; border: 4px solid transparent; border-left: 5px solid #000; border-right: 0; }
.pointer-arrow { position: absolute; left: 925px; top: 425px; width: 90px; height: 140px; filter: drop-shadow(5px 4px 2px rgb(0 0 0 / 35%)); }
.cursor { position: absolute; left: 879px; top: 557px; width: 14px; height: 20px; }
```
